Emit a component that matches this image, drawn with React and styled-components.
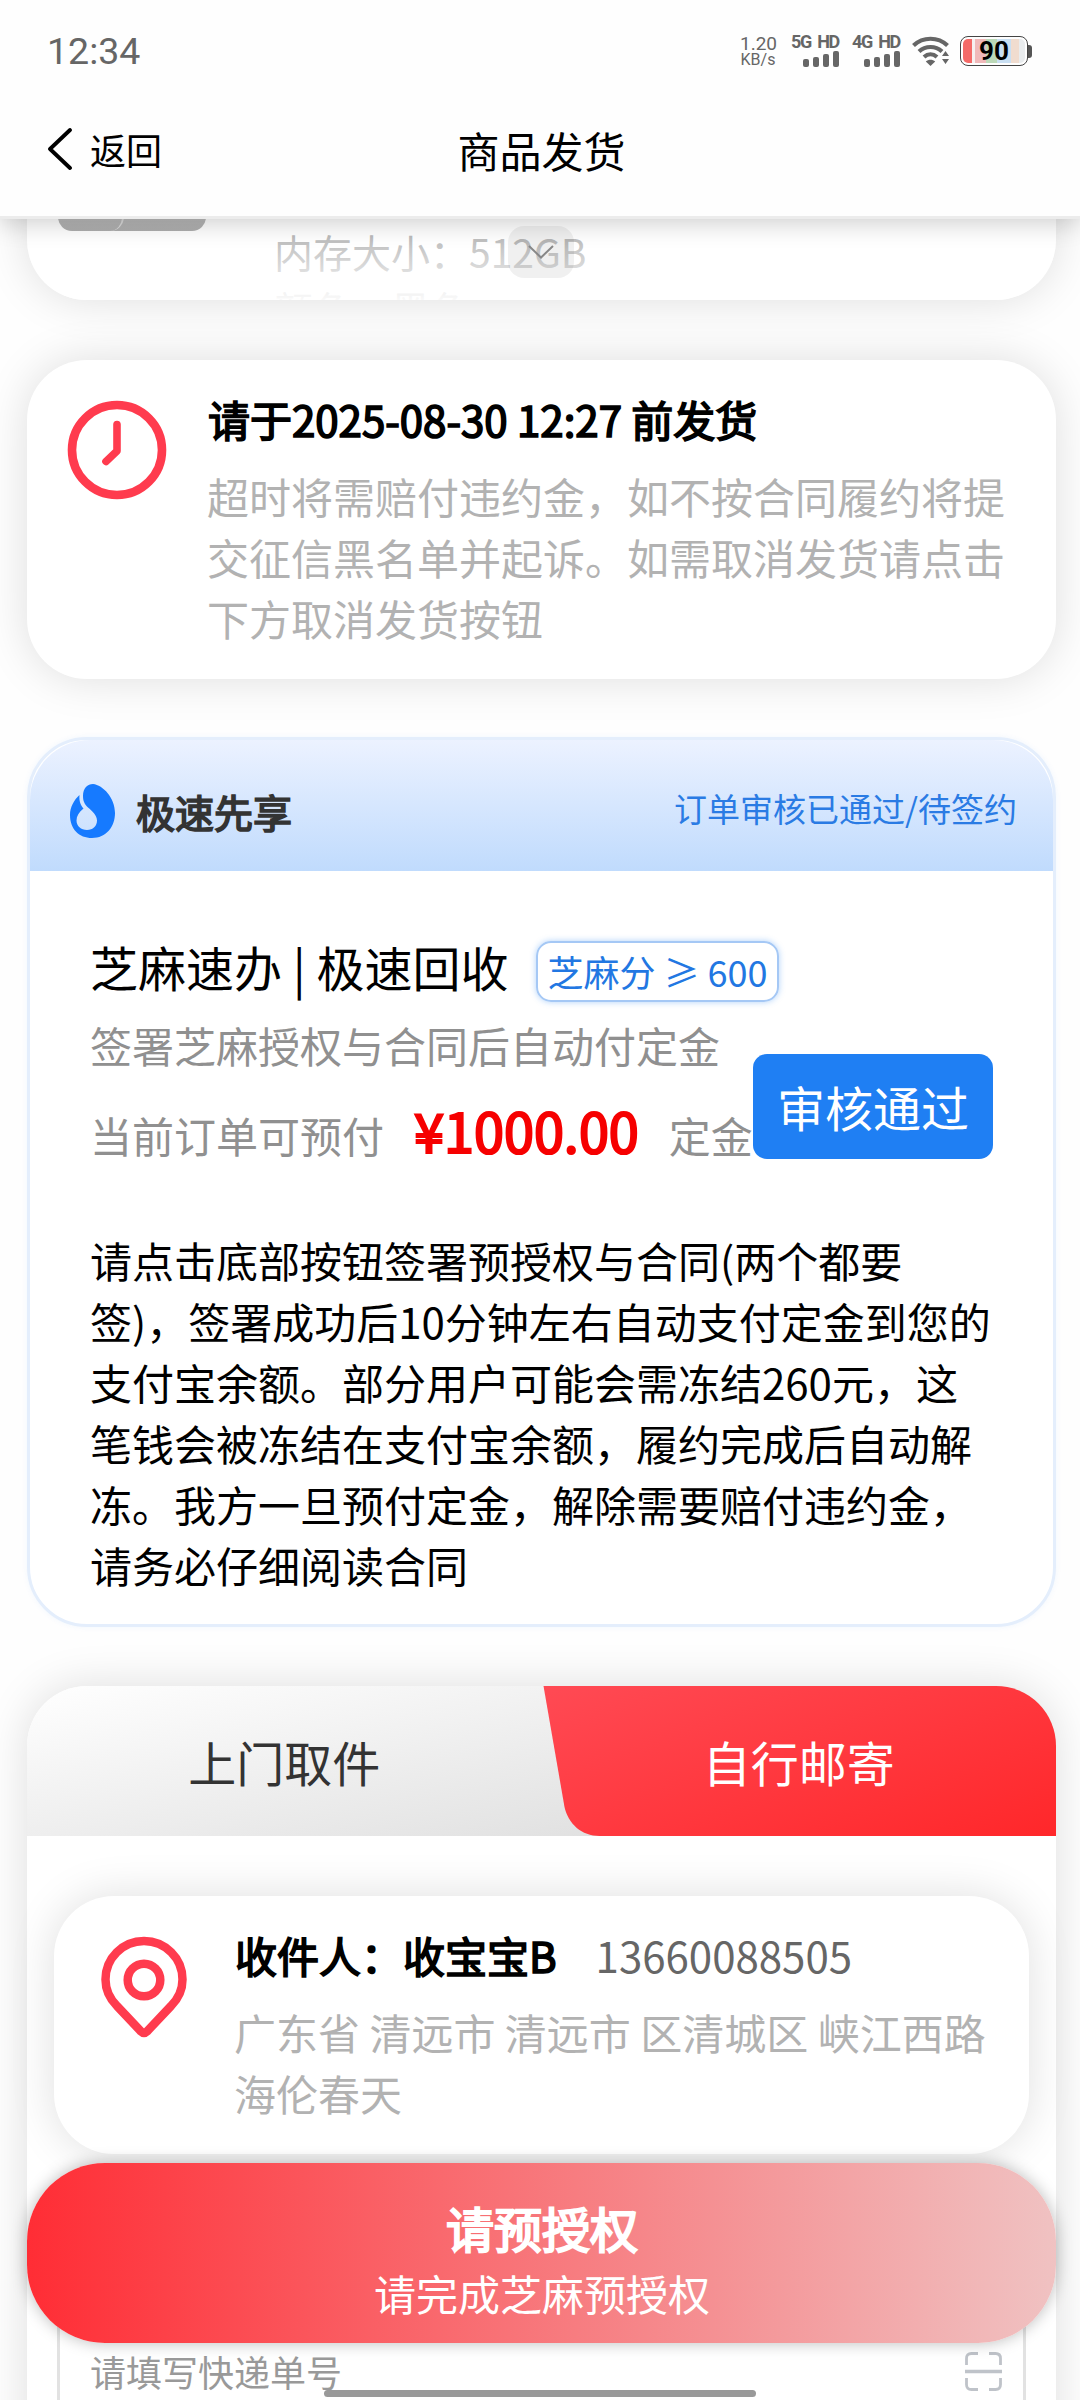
import React from 'react';
import styled, { createGlobalStyle } from 'styled-components';

const GlobalStyle = createGlobalStyle`
  * {
    box-sizing: border-box;
  }
  body {
    margin: 0;
    background: #fefefe;
  }
`;

const Screen = styled.div`
  position: relative;
  display: flex;
  flex-direction: column;
  width: 1080px;
  height: 2400px;
  overflow: hidden;
  background: #fefefe;
  color: #000;
  font-family: 'Noto Sans CJK SC', sans-serif;
  font-weight: 400;
  font-size: 42px;
  line-height: 61px;
`;

/* ---------- header ---------- */

const Header = styled.header`
  position: relative;
  z-index: 2;
  flex: none;
  height: 219px;
  background: #fefefe;
  border-bottom: 3px solid #ececec;
  box-shadow: 0 4px 24px rgba(0, 0, 0, 0.2);
`;

const StatusBar = styled.div`
  display: flex;
  align-items: center;
  justify-content: space-between;
  height: 102px;
  padding: 0 48px 0 47px;
  color: #666;
  font-family: Roboto, sans-serif;
  font-weight: 400;
`;

const Clock = styled.span`
  font-size: 37.5px;
  line-height: 44px;
`;

const StatusIcons = styled.div`
  display: flex;
  align-items: center;
`;

const Speed = styled.div`
  width: 36px;
  margin-right: 14px;
  font-size: 19px;
  line-height: 17px;
  text-align: center;

  small {
    display: block;
    font-size: 16px;
    line-height: 16px;
  }
`;

const Signal = styled.div`
  display: flex;
  flex-direction: column;
  align-items: flex-end;
  width: 49px;
  margin-right: 12px;
  font-size: 18px;
  font-weight: 700;
  line-height: 18px;
  letter-spacing: -1.3px;
  word-spacing: 3px;
  white-space: nowrap;
`;

const Bars = styled.div`
  display: flex;
  align-items: flex-end;
  gap: 4px;
  height: 16px;
  margin: 0 0 2px;
`;

const Bar = styled.i`
  width: 6px;
  height: ${props => props.$h}px;
  border-radius: 2px;
  background: #666;
`;

const Battery = styled.div`
  display: flex;
  align-items: center;
  margin-left: 11px;
`;

const BatteryBody = styled.div`
  width: 68px;
  height: 30px;
  padding: 2px;
  border: 1.5px solid #444;
  border-radius: 8px;
`;

const BatteryFill = styled.div`
  height: 100%;
  border-radius: 5px;
  background: linear-gradient(
    90deg,
    #f46a68 0 9px,
    #f6f0f0 9px 12px,
    #f0b9ba 12px 23px,
    #bcd9b8 23px 34px,
    #c9dff2 34px 48px,
    #f0dccf 48px 56px,
    #e9ecee 56px
  );
  color: #000;
  font-size: 26px;
  font-weight: 700;
  line-height: 25px;
  text-align: center;
`;

const BatteryTip = styled.i`
  width: 4px;
  height: 13px;
  border-radius: 0 3px 3px 0;
  background: #555;
`;

const NavBar = styled.div`
  display: grid;
  grid-template-columns: 1fr auto 1fr;
  align-items: center;
  height: 95px;
  padding: 0 43px 0 45px;
`;

const BackButton = styled.div`
  display: flex;
  align-items: center;
  gap: 15px;
  font-size: 36px;
`;

const NavTitle = styled.div`
  padding-left: 1px;
`;

/* ---------- cards ---------- */

const Scroller = styled.main`
  flex: 1;
  min-height: 0;
  overflow: hidden;
  padding: 0 24px 0 27px;
`;

const Card = styled.section`
  border-radius: 60px;
  background: #fff;
  box-shadow: 0 0 45px rgba(0, 0, 0, 0.13);
`;

const ProductCard = styled(Card)`
  position: relative;
  display: flex;
  height: 281px;
  margin-top: -200px;
  padding: 0 31px;
  overflow: hidden;
`;

const ProductPhoto = styled.div`
  display: flex;
  width: 148px;
  height: 212px;
  border-radius: 14px;
  overflow: hidden;
  background: linear-gradient(180deg, #b8b8b8 92%, #8c8c8c);
`;

const ProductEdge = styled.div`
  width: 66px;
  border-right: 2px solid #d0d0d0;
  border-radius: 0 0 14px 0;
`;

const ProductInfo = styled.div`
  margin: 204px 0 0 68px;
  color: #999;
  font-size: 39px;
  line-height: 57px;
  white-space: nowrap;
`;

const Fade = styled.div`
  position: absolute;
  inset: 200px 0 0;
  background: linear-gradient(180deg, rgba(255, 255, 255, 0.18), rgba(255, 255, 255, 0.95));
`;

const ExpandButton = styled.div`
  position: absolute;
  left: 481px;
  bottom: 22px;
  display: flex;
  align-items: center;
  justify-content: center;
  width: 66px;
  height: 52px;
  border-radius: 16px;
  background: rgba(0, 0, 0, 0.06);
`;

const InfoCard = styled(Card)`
  display: flex;
  height: ${props => props.$height}px;
  margin: ${props => props.$margin};
  padding: 28px 40px 0;

  > svg {
    flex: none;
    margin: 12px 40px 0 0;
  }
`;

const InfoTitle = styled.div`
  display: flex;
  gap: 39px;
  margin-bottom: 16px;
  padding-left: 1px;
  white-space: pre;
`;

const Strong = styled.span`
  -webkit-text-stroke: 1.7px currentColor;
`;

const Phone = styled.span`
  color: #666;
`;

const InfoText = styled.div`
  color: #b2b2b2;
`;

const CreditCard = styled.section`
  height: 890px;
  margin-top: 58px;
  border: 3px solid #e4eefc;
  border-radius: 60px;
  background: #fff;
  box-shadow: 0 0 6px rgba(30, 125, 243, 0.06);
`;

const CreditHeader = styled.div`
  display: flex;
  align-items: center;
  height: 131px;
  padding: 11px 36px 0 40px;
  border-radius: 60px 60px 0 0;
  background: linear-gradient(180deg, #ecf2ff, #c0dbfd);
`;

const CreditName = styled(Strong)`
  flex: 1;
  margin-left: 21px;
  color: #333;
  font-size: 39px;
`;

const CreditStatus = styled.span`
  padding-bottom: 6px;
  color: #2a7be4;
  font-size: 33px;
`;

const CreditBody = styled.div`
  padding: 60px 60px 0;
`;

const Offer = styled.div`
  display: flex;
  align-items: flex-start;
`;

const OfferInfo = styled.div`
  width: 663px;
  color: #909090;
  white-space: pre;
`;

const OfferTitle = styled.div`
  display: flex;
  gap: 28px;
  height: 70px;
  color: #000;
  font-size: 48px;
  line-height: 70px;
`;

const ScoreTag = styled.span`
  height: 61px;
  margin-top: 10px;
  padding: 0 9px;
  border: 2px solid #a5c8f5;
  border-radius: 15px;
  box-shadow: 0 0 6px rgba(30, 125, 243, 0.35);
  color: #2277e2;
  font-size: 36px;
  line-height: 57px;
`;

const OfferNote = styled.div`
  margin-top: 13px;
`;

const Deposit = styled.div`
  display: flex;
  align-items: baseline;
  gap: 30px;
  margin-top: 16px;
  line-height: 78px;
`;

const Price = styled(Strong)`
  color: #f60000;
  font-size: 54px;
  -webkit-text-stroke-width: 2.2px;
`;

const StateButton = styled.div`
  width: 240px;
  height: 105px;
  margin-top: 123px;
  border-radius: 14px;
  background: #1f7ff3;
  color: #fff;
  font-size: 48px;
  line-height: 104px;
  text-align: center;
`;

const Notice = styled.p`
  margin: 55px 0 0;
`;

const DeliveryCard = styled(Card)`
  height: 1000px;
  margin-top: 59px;
`;

const Tabs = styled.div`
  display: flex;
  height: 150px;
  border-radius: 60px 60px 0 0;
  overflow: hidden;
  background: #e1e1e1 linear-gradient(168deg, #fff, #e1e1e1) 0 0 / 570px 150px no-repeat;
`;

const Tab = styled.div`
  flex: 1;
  color: ${props => (props.$active ? '#fff' : '#333')};
  font-size: 48px;
  line-height: 150px;
  text-align: center;

  ${props =>
    props.$active &&
    `
    clip-path: path('M2 0 H515 V150 H58 C40 150 27 138 23 121 Z');
    background: linear-gradient(160deg, #ff4a54, #ff272a);
  `}
`;

const TrackingInput = styled.div`
  display: flex;
  align-items: center;
  justify-content: space-between;
  height: 150px;
  margin: 142px 30px 0;
  padding: 0 21px 0 30px;
  border: 3px solid #e2e2e2;
  border-radius: 30px;
  color: #999;
  font-size: 36px;
`;

/* ---------- bottom ---------- */

const SubmitButton = styled.div`
  position: absolute;
  left: 27px;
  right: 24px;
  bottom: 57px;
  height: 180px;
  padding: 29px 0 0 1px;
  border-radius: 78px;
  background: linear-gradient(90deg, #ff2d35, #f0c2c2);
  box-shadow: 0 0 16px rgba(0, 0, 0, 0.27);
  color: #fff;
  text-align: center;

  ${Strong} {
    display: block;
    font-size: 48px;
    line-height: 70px;
    -webkit-text-stroke-width: 2.2px;
  }
`;

const HomeBar = styled.div`
  position: absolute;
  left: 324px;
  bottom: 3px;
  width: 432px;
  height: 7px;
  border-radius: 4px;
  background: #999;
`;

const SignalIcon = ({ label }) => (
  <Signal>
    {label}
    <Bars>
      {[8, 10, 13, 16].map(h => (
        <Bar key={h} $h={h} />
      ))}
    </Bars>
  </Signal>
);

const WifiIcon = () => (
  <svg width="37" height="30" viewBox="0 0 37 30" fill="none" stroke="#666" strokeWidth="4.2">
    <path d="M1.5 9.5C11 .5 26 .5 35.5 9.5" />
    <path d="M7 15.5c6.500-6 16.500-6 23 0" />
    <path d="M12 21c4-3.500 9-3.500 13 0" />
    <path d="M13.800 25.500c2.600-2.400 6.800-2.400 9.400 0L18.500 30z" fill="#666" stroke="none" />
    <path d="M33.500 15l3.500 5h-7zM33.500 28l3.500-5h-7z" fill="#666" stroke="#fefefe" strokeWidth="1" paintOrder="stroke" />
  </svg>
);

const ClockIcon = () => (
  <svg width="100" height="100" viewBox="0 0 100 100" fill="none" stroke="#ff3b4e" strokeLinecap="round" strokeLinejoin="round">
    <circle cx="50" cy="50" r="45" strokeWidth="8.600" />
    <path d="M50 24.500V51L39 61.500" strokeWidth="7.600" />
  </svg>
);

const PinIcon = () => (
  <svg width="100" height="102" viewBox="0 0 100 102" fill="none" stroke="#ff3b4e" strokeWidth="8.500" strokeLinejoin="round">
    <path d="M50 5a38.500 38.500 0 0 0-38.500 38.500c0 11 4.500 19.500 11.500 26.500l24 25.500q3 3 6 0L77 70c7-7 11.500-15.500 11.500-26.500A38.500 38.500 0 0 0 50 5z" />
    <circle cx="50" cy="44" r="16.300" />
  </svg>
);

const DropIcon = () => (
  <svg width="45" height="54" viewBox="0 0 45 54">
    <path
      fill="#167aff"
      d="M13 12C13 4 17.500 0 23 0c10 1 22 14 22 29 0 14-9 25-23 25C9 54 0 45 0 31 0 23 4 16 9.500 11 9 17 10.500 21 13.500 24.500 9 28 6.500 32 6.500 36.500 6.500 42 11 46 17 46s10-4 10-9.500C27 31 22 27 18 23.500 14.500 20 13 17 13 12z"
    />
  </svg>
);

const ScanIcon = () => (
  <svg width="37" height="39" viewBox="0 0 37 39" fill="none" stroke="#bfc3c9" strokeWidth="2.800">
    <path d="M1.500 13V6.500q0-5 5-5H13M24 1.500h6.500q5 0 5 5V13M35.500 26v6.500q0 5-5 5H24M13 37.500H6.500q-5 0-5-5V26" />
    <path d="M0 19.500h37" strokeWidth="3.600" />
  </svg>
);

export default function App() {
  return (
    <Screen lang="zh-CN">
      <GlobalStyle />
      <Header>
        <StatusBar>
          <Clock>12:34</Clock>
          <StatusIcons>
            <Speed>
              1.20
              <small>KB/s</small>
            </Speed>
            <SignalIcon label="5G HD" />
            <SignalIcon label="4G HD" />
            <WifiIcon />
            <Battery>
              <BatteryBody>
                <BatteryFill>90</BatteryFill>
              </BatteryBody>
              <BatteryTip />
            </Battery>
          </StatusIcons>
        </StatusBar>
        <NavBar>
          <BackButton>
            <svg width="30" height="44" viewBox="0 0 30 44" fill="none" stroke="#000" strokeWidth="3.800" strokeLinecap="round" strokeLinejoin="round">
              <path d="M25 2L5 21l20 19" />
            </svg>
            返回
          </BackButton>
          <NavTitle>商品发货</NavTitle>
        </NavBar>
      </Header>

      <Scroller>
        <ProductCard>
          <ProductPhoto>
            <ProductEdge />
          </ProductPhoto>
          <ProductInfo>
            <div>内存大小：512GB</div>
            <div>颜色：黑色</div>
          </ProductInfo>
          <Fade />
          <ExpandButton>
            <svg width="26" height="14" viewBox="0 0 26 14" fill="none" stroke="#888" strokeWidth="2">
              <path d="M1 1l12 11.500L25 1" />
            </svg>
          </ExpandButton>
        </ProductCard>

        <InfoCard $height={319} $margin="60px 0 0">
          <ClockIcon />
          <div>
            <InfoTitle>
              <Strong>请于2025-08-30 12:27 前发货</Strong>
            </InfoTitle>
            <InfoText>超时将需赔付违约金，如不按合同履约将提交征信黑名单并起诉。如需取消发货请点击下方取消发货按钮</InfoText>
          </div>
        </InfoCard>

        <CreditCard>
          <CreditHeader>
            <DropIcon />
            <CreditName>极速先享</CreditName>
            <CreditStatus>订单审核已通过/待签约</CreditStatus>
          </CreditHeader>
          <CreditBody>
            <Offer>
              <OfferInfo>
                <OfferTitle>
                  芝麻速办 | 极速回收
                  <ScoreTag>芝麻分 ≥ 600</ScoreTag>
                </OfferTitle>
                <OfferNote>签署芝麻授权与合同后自动付定金</OfferNote>
                <Deposit>
                  <span>当前订单可预付</span>
                  <Price>¥1000.00</Price>
                  <span>定金</span>
                </Deposit>
              </OfferInfo>
              <StateButton>审核通过</StateButton>
            </Offer>
            <Notice>
              请点击底部按钮签署预授权与合同(两个都要签)，签署成功后10分钟左右自动支付定金到您的支付宝余额。部分用户可能会需冻结260元，这笔钱会被冻结在支付宝余额，履约完成后自动解冻。我方一旦预付定金，解除需要赔付违约金，请务必仔细阅读合同
            </Notice>
          </CreditBody>
        </CreditCard>

        <DeliveryCard>
          <Tabs>
            <Tab>上门取件</Tab>
            <Tab $active>自行邮寄</Tab>
          </Tabs>
          <InfoCard $height={258} $margin="60px 27px 0">
            <PinIcon />
            <div>
              <InfoTitle>
                <Strong>收件人：收宝宝B</Strong>
                <Phone>13660088505</Phone>
              </InfoTitle>
              <InfoText>广东省 清远市 清远市 区清城区 峡江西路海伦春天</InfoText>
            </div>
          </InfoCard>
          <TrackingInput>
            请填写快递单号
            <ScanIcon />
          </TrackingInput>
        </DeliveryCard>
      </Scroller>

      <SubmitButton>
        <Strong>请预授权</Strong>
        请完成芝麻预授权
      </SubmitButton>
      <HomeBar />
    </Screen>
  );
}
